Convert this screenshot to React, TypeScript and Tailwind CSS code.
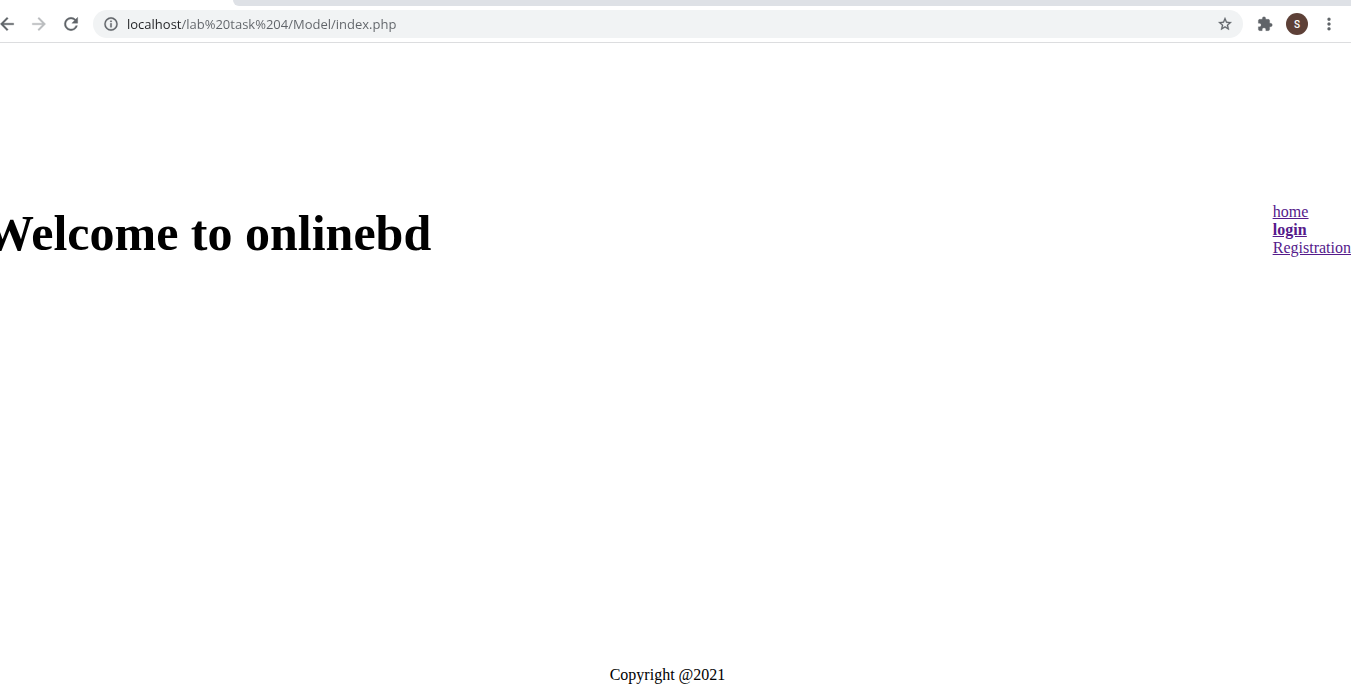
import type { ReactNode } from "react";

const paths = {
  back: "M20 11H7.83l5.59-5.59L12 4l-8 8 8 8 1.41-1.41L7.83 13H20v-2z",
  forward: "M12 4l-1.41 1.41L16.17 11H4v2h12.17l-5.58 5.59L12 20l8-8z",
  reload:
    "M17.65 6.35A7.958 7.958 0 0 0 12 4a8 8 0 1 0 7.73 10h-2.08A5.99 5.99 0 0 1 12 18c-3.31 0-6-2.69-6-6s2.69-6 6-6c1.66 0 3.14.69 4.22 1.78L13 11h7V4l-2.35 2.35z",
  info: "M11 17h2v-6h-2v6zm1-15a10 10 0 1 0 0 20 10 10 0 0 0 0-20zm0 18c-4.41 0-8-3.59-8-8s3.59-8 8-8 8 3.59 8 8-3.59 8-8 8zM11 9h2V7h-2v2z",
  star: "M22 9.24l-7.19-.62L12 2 9.19 8.63 2 9.24l5.46 4.73L5.82 21 12 17.27 18.18 21l-1.63-7.03L22 9.24zM12 15.4l-3.76 2.27 1-4.28-3.32-2.88 4.38-.38L12 6.1l1.71 4.04 4.38.38-3.32 2.88 1 4.28L12 15.4z",
  puzzle:
    "M20.5 11H19V7c0-1.1-.9-2-2-2h-4V3.5a2.5 2.5 0 0 0-5 0V5H4c-1.1 0-1.99.9-1.99 2v3.8H3.5c1.49 0 2.7 1.21 2.7 2.7s-1.21 2.7-2.7 2.7H2V20c0 1.1.9 2 2 2h3.8v-1.5c0-1.49 1.21-2.7 2.7-2.7s2.7 1.21 2.7 2.7V22H17c1.1 0 2-.9 2-2v-4h1.5a2.5 2.5 0 0 0 0-5z",
  more: "M12 8a1.8 1.8 0 1 0 0-3.6A1.8 1.8 0 0 0 12 8zm0 2.2a1.8 1.8 0 1 0 0 3.6 1.8 1.8 0 0 0 0-3.6zm0 5.8a1.8 1.8 0 1 0 0 3.6 1.8 1.8 0 0 0 0-3.6z",
};

function Icon({ name, className }: { name: keyof typeof paths; className: string }) {
  return (
    <svg viewBox="0 0 24 24" fill="currentColor" stroke="currentColor" strokeWidth="0.4" aria-hidden="true" className={className}>
      <path d={paths[name]} />
    </svg>
  );
}

function ToolButton({ label, disabled, children }: { label: string; disabled?: boolean; children: ReactNode }) {
  return (
    <button
      type="button"
      aria-label={label}
      disabled={disabled}
      className="flex h-7 w-8 shrink-0 items-center justify-center text-[#5f6368] disabled:text-[#babcbe]"
    >
      {children}
    </button>
  );
}

function BrowserBar() {
  return (
    <header className="overflow-hidden border-b border-[#dcdddf] bg-white">
      <div className="flex h-1.5">
        <div className="w-[233px] shrink-0" />
        <div className="flex-1 rounded-bl-md bg-[#dee1e6]" />
      </div>
      <div className="-ml-[9px] flex items-center pt-1 pr-1.5 pb-1">
        <ToolButton label="Back">
          <Icon name="back" className="size-5" />
        </ToolButton>
        <ToolButton label="Forward" disabled>
          <Icon name="forward" className="size-5" />
        </ToolButton>
        <ToolButton label="Reload">
          <Icon name="reload" className="size-5" />
        </ToolButton>
        <div className="mr-1.5 ml-1.5 flex h-7 min-w-0 flex-1 items-center rounded-full bg-[#f1f3f4] pl-0.5">
          <ToolButton label="View site information">
            <Icon name="info" className="size-4" />
          </ToolButton>
          <input
            type="text"
            aria-label="Address"
            defaultValue="localhost/lab%20task%204/Model/index.php"
            className="h-7 min-w-0 flex-1 bg-[linear-gradient(to_right,#202124_55px,#5f6368_55px)] bg-clip-text font-['Open_Sans',sans-serif] text-[13px] text-transparent caret-black outline-none"
          />
          <ToolButton label="Bookmark this page">
            <Icon name="star" className="size-4" />
          </ToolButton>
          <div className="w-0.5" />
        </div>
        <ToolButton label="Extensions">
          <Icon name="puzzle" className="size-4" />
        </ToolButton>
        <ToolButton label="Profile">
          <span className="flex size-[22px] items-center justify-center rounded-full bg-[#5d4037] font-['Roboto',sans-serif] text-[10px] font-medium text-white">
            S
          </span>
        </ToolButton>
        <ToolButton label="Menu">
          <Icon name="more" className="size-5" />
        </ToolButton>
      </div>
    </header>
  );
}

export default function App() {
  return (
    <div className="flex min-h-screen flex-col overflow-hidden bg-white font-['Liberation_Serif',serif] text-base text-black">
      <BrowserBar />
      <main className="flex flex-1 items-start justify-between pt-40">
        <h1 className="-ml-4 text-[50px] leading-[60px] font-bold">Welcome to onlinebd</h1>
        <nav className="flex flex-col items-start leading-[18px] text-[#551a8b] underline">
          <a href="#home">home</a>
          <a href="#login" className="font-bold">login</a>
          <a href="#registration">Registration</a>
        </nav>
      </main>
      <footer className="pr-4 pb-3.5 text-center leading-[18px]">Copyright @2021</footer>
    </div>
  );
}
